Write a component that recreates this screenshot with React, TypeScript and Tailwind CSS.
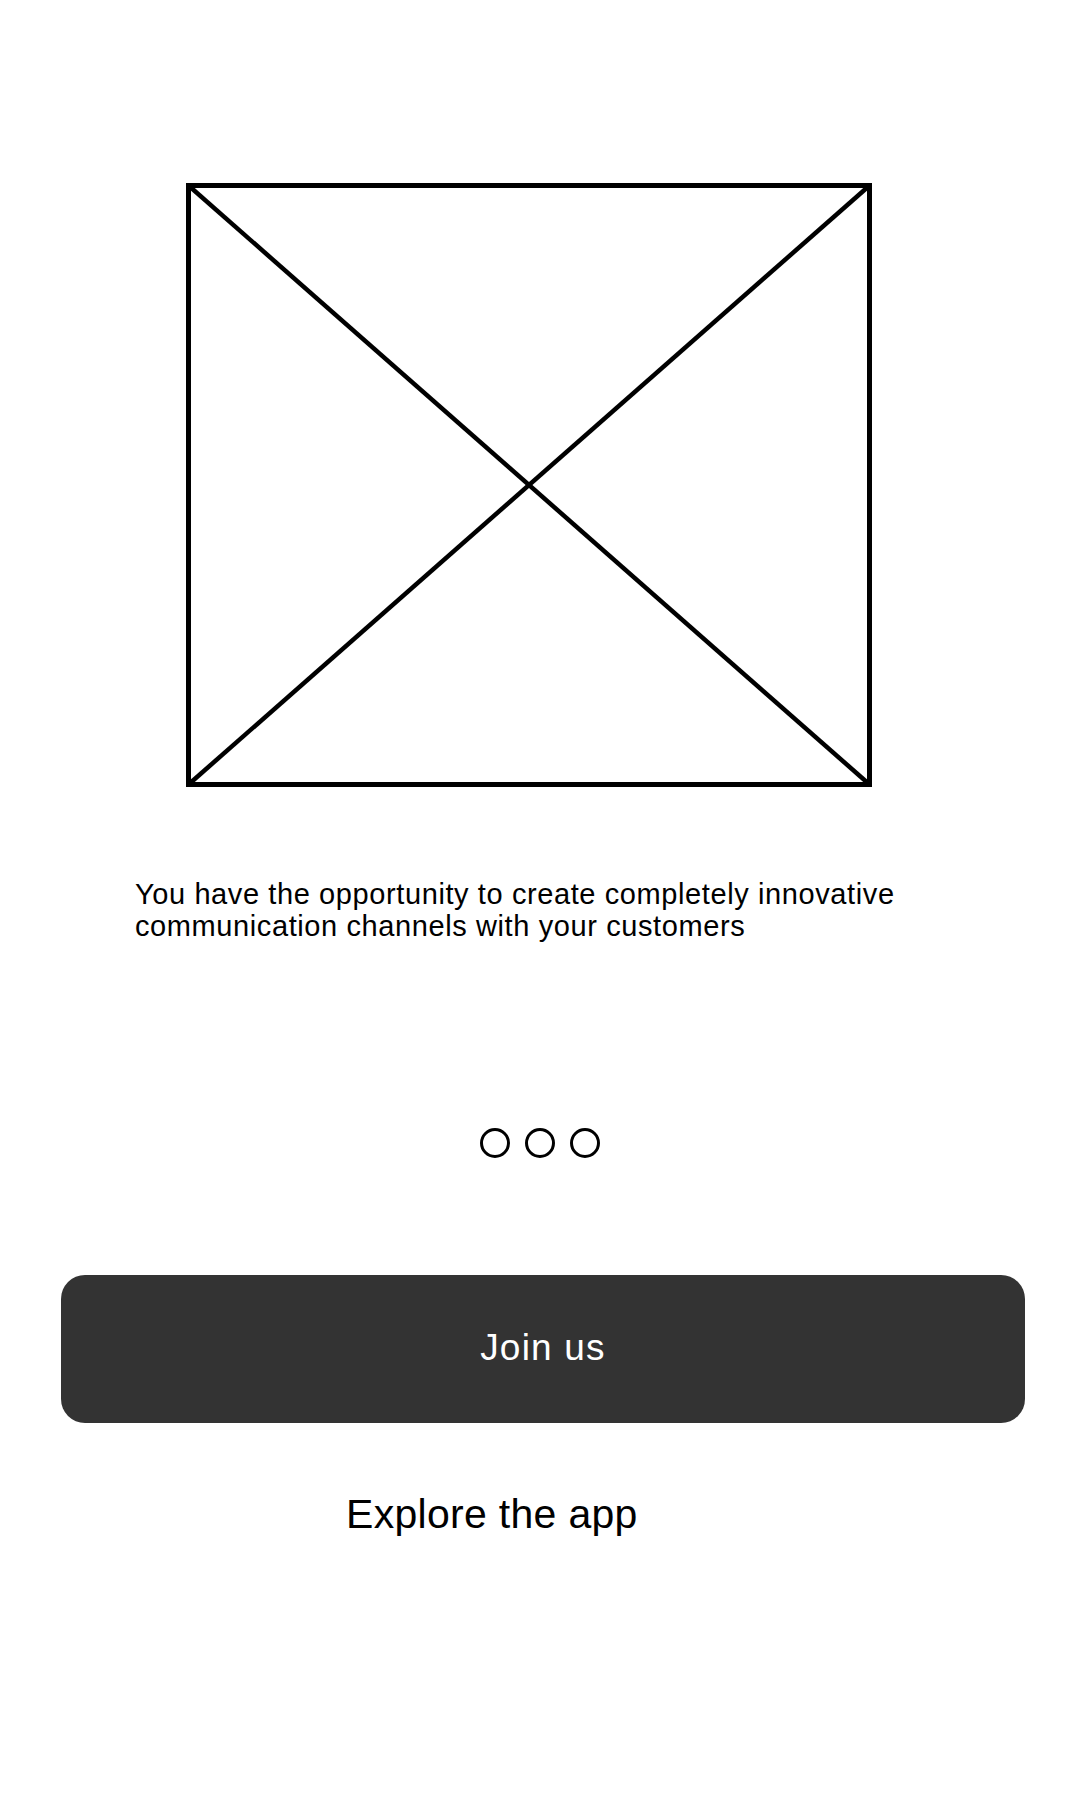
import React from "react";

export default function App() {
  return (
    <div
      className="w-[1080px] h-[1800px] bg-white flex flex-col text-black overflow-hidden"
      style={{ fontFamily: '"Liberation Sans", Arial, sans-serif' }}
    >
      <svg
        className="block mt-[183px] ml-[186px] shrink-0"
        width="686"
        height="604"
        viewBox="0 0 686 604"
      >
        <rect x="2.5" y="2.5" width="681" height="599" fill="none" stroke="#000" strokeWidth="5" />
        <line x1="2.5" y1="2.5" x2="683.5" y2="601.5" stroke="#000" strokeWidth="4.5" />
        <line x1="683.5" y1="2.5" x2="2.5" y2="601.5" stroke="#000" strokeWidth="4.5" />
      </svg>

      <p className="mt-[91px] ml-[135px] w-[860px] text-[29px] leading-[32px] tracking-[0.6px]">
        You have the opportunity to create completely innovative
        <br />
        communication channels with your customers
      </p>

      <div className="mt-[186px] flex justify-center gap-[15px]">
        <div className="w-[30px] h-[30px] rounded-full border-[3px] border-black" />
        <div className="w-[30px] h-[30px] rounded-full border-[3px] border-black" />
        <div className="w-[30px] h-[30px] rounded-full border-[3px] border-black" />
      </div>

      <button className="mt-[117px] ml-[61px] w-[964px] h-[148px] rounded-[24px] bg-[#333333] text-white text-[37px] leading-none tracking-[1.2px] flex items-center justify-center pb-[4px]">
        Join us
      </button>

      <div className="mt-[68px] ml-[346px] text-[41px] leading-[47px] tracking-[0.3px]">Explore the app</div>
    </div>
  );
}
